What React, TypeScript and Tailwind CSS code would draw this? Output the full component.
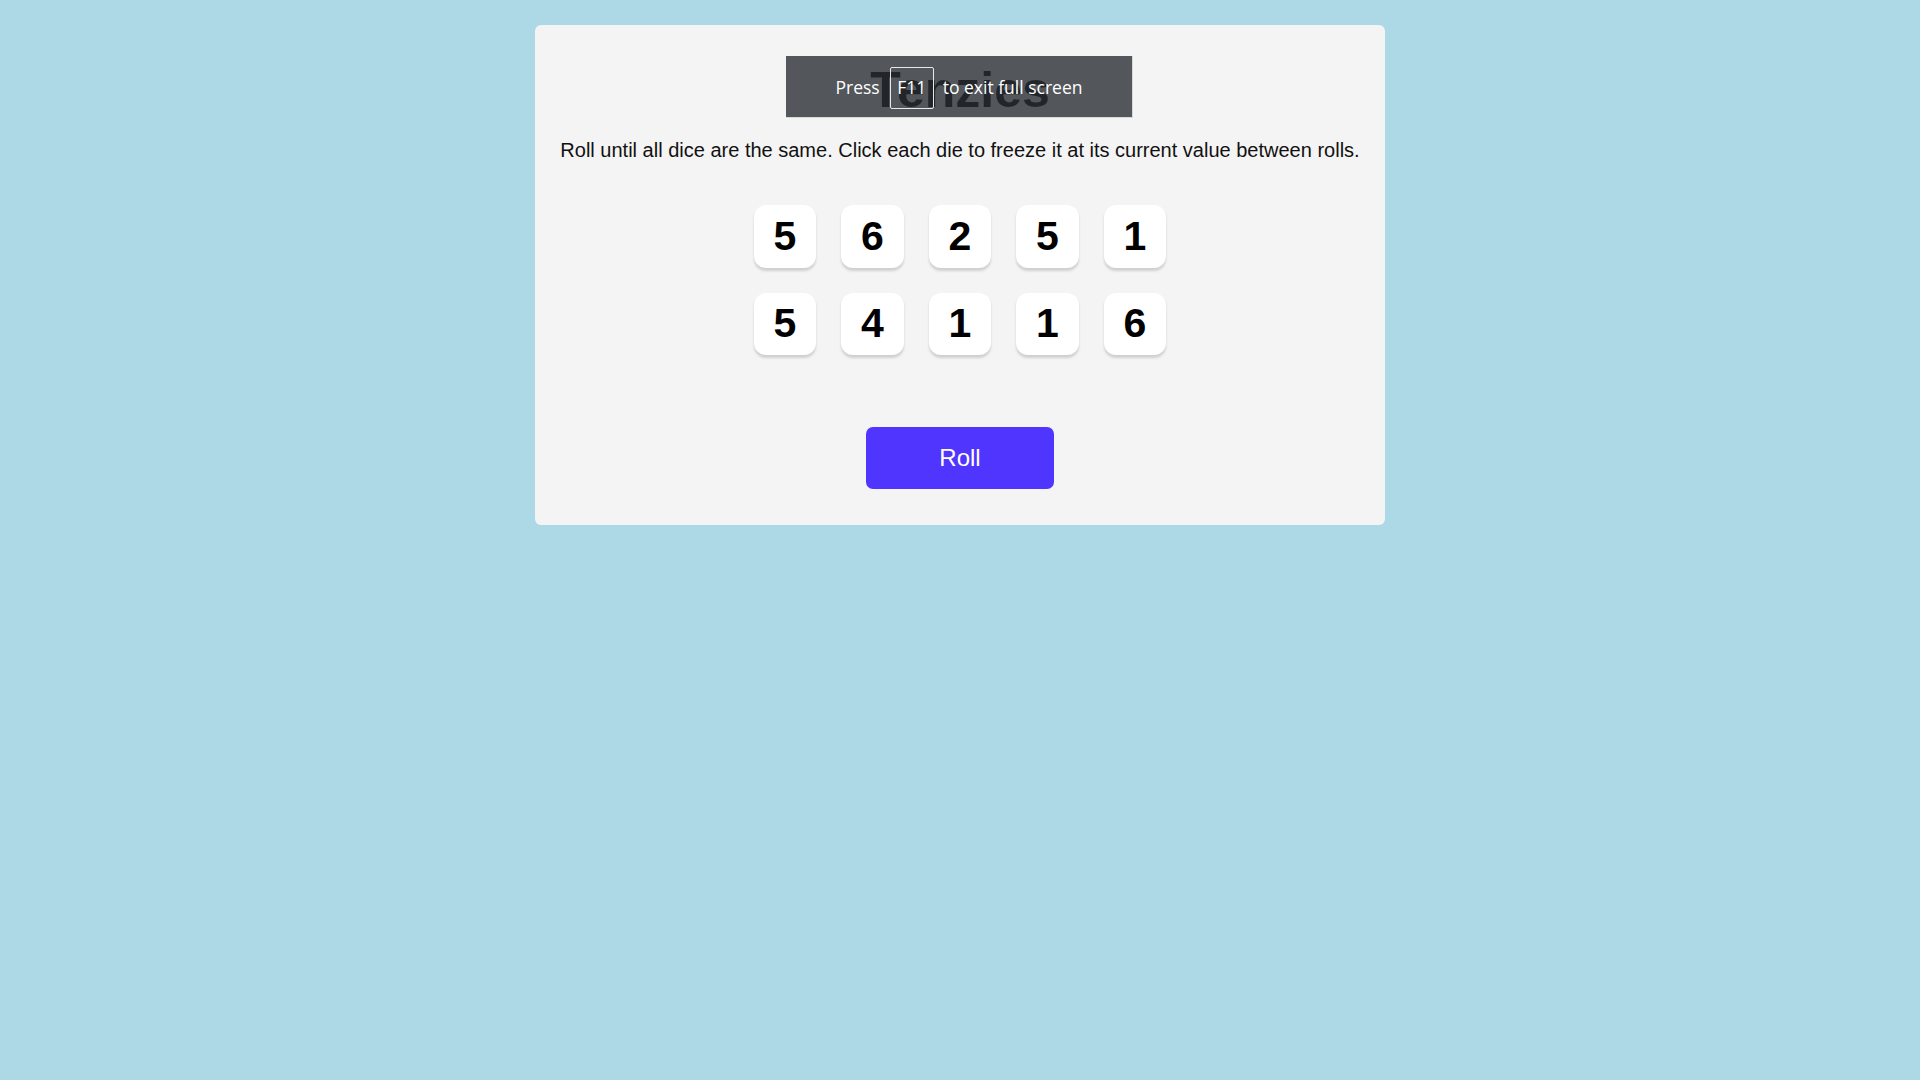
const dice = [5, 6, 2, 5, 1, 5, 4, 1, 1, 6]

function Die({ value }: { value: number }) {
  return (
    <div className="flex h-[62.5px] w-[62.5px] cursor-pointer items-center justify-center rounded-[12px] bg-white shadow-[0_2.5px_2.5px_rgba(0,0,0,0.15)]">
      <span className="text-[41px] font-bold leading-none text-black">{value}</span>
    </div>
  )
}

export default function App() {
  return (
    <div className="min-h-screen bg-[#ADD8E6] pt-[25px] font-['Liberation_Sans',Arial,sans-serif]">
      <main className="relative mx-auto flex h-[500px] w-[850px] flex-col items-center rounded-[6px] bg-[#F4F4F4]">
        <h1 className="mt-[36px] text-[50px] font-bold leading-[58px] text-[#111]">Tenzies</h1>
        <p className="mt-[20px] text-center text-[20px] leading-[23px] text-[#111]">
          Roll until all dice are the same. Click each die to freeze it at its current value between rolls.
        </p>
        <div className="mt-[43px] grid grid-cols-5 gap-[25px]">
          {dice.map((d, i) => (
            <Die key={i} value={d} />
          ))}
        </div>
        <button className="mt-[72px] h-[62px] w-[188px] cursor-pointer rounded-[7px] bg-[#5035FF] text-[24px] text-white">
          Roll
        </button>

        {/* browser full screen notice */}
        <div className="absolute left-[251px] top-[31px] flex h-[62px] w-[347px] items-center justify-center border-b border-r border-[#d8d8d8] bg-[rgba(39,43,50,0.79)] pt-[2px] font-['Open_Sans','Noto_Sans',sans-serif] text-[17.5px] text-white">
          <span>Press</span>
          <span className="ml-[10px] flex h-[42px] w-[44px] items-center justify-center rounded-[2px] border border-[#e8e8e8]">
            F11
          </span>
          <span className="ml-[9px]">to exit full screen</span>
        </div>
      </main>
    </div>
  )
}
